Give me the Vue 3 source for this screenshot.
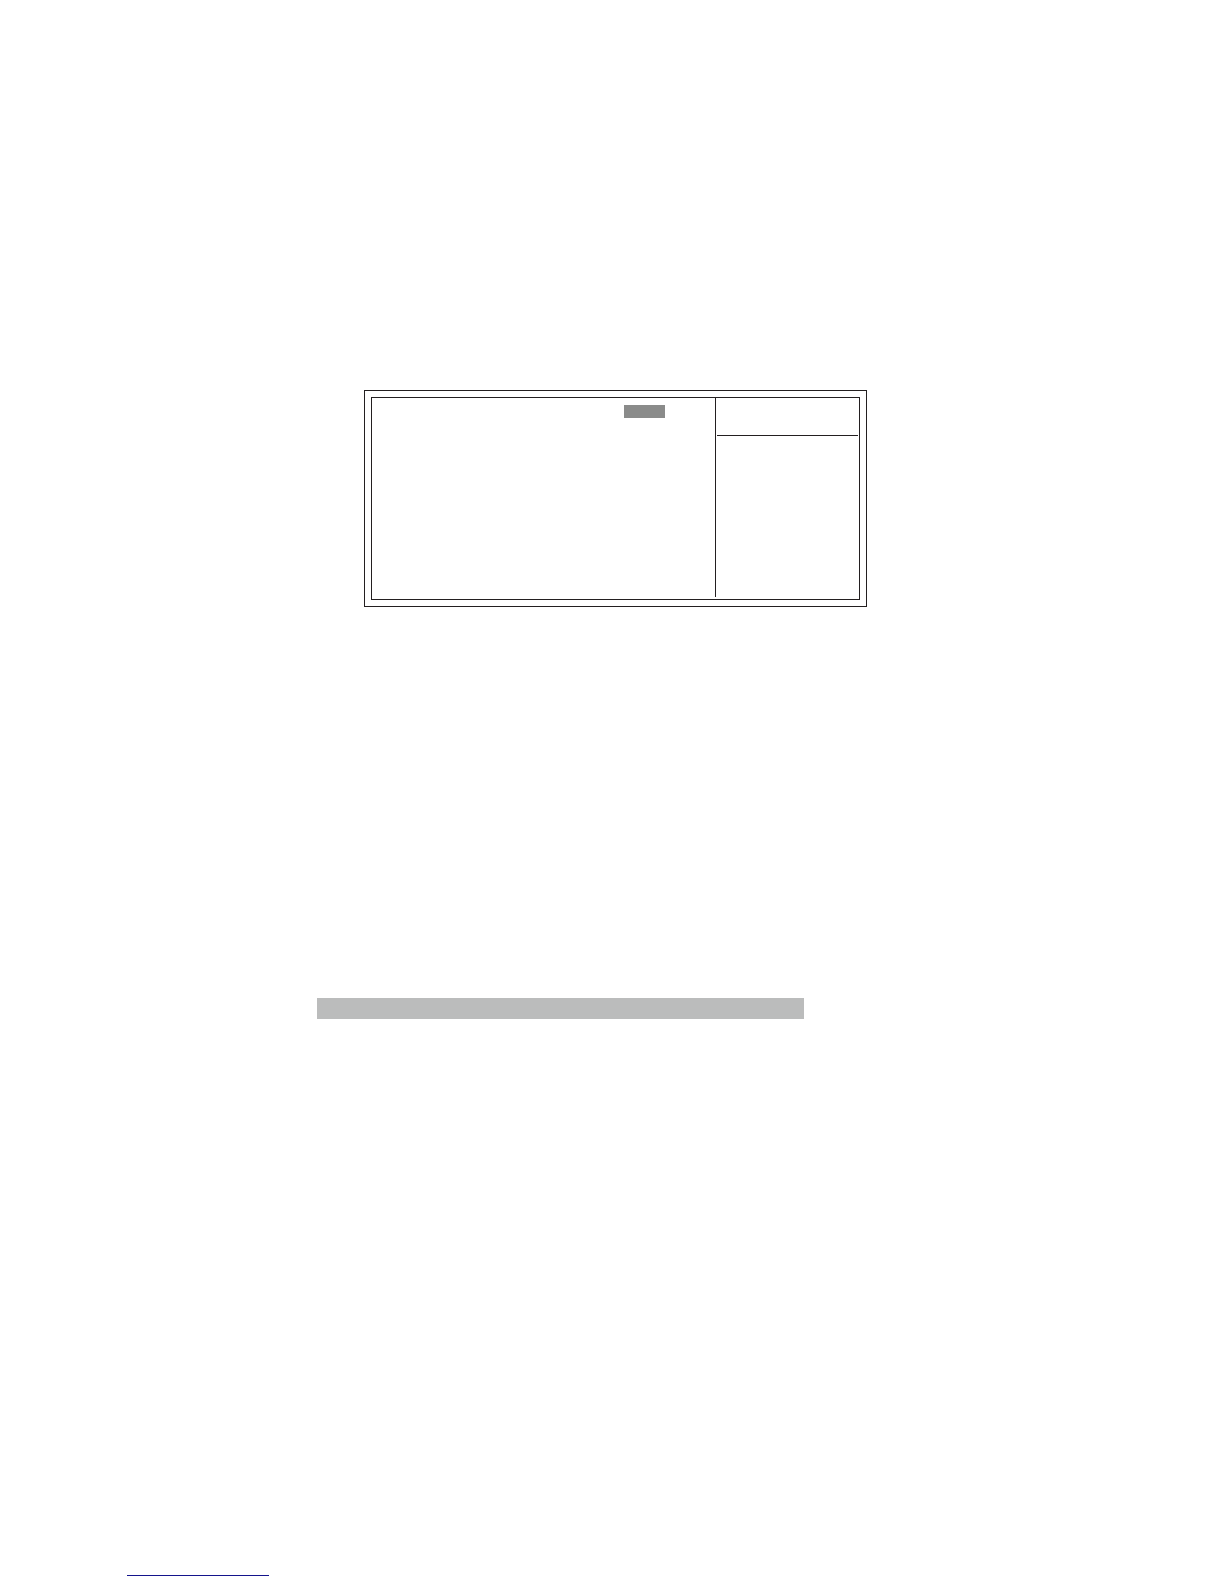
<template>
  <main class="page">
    <section class="setup">
      <div class="screen">
        <div class="options">
          <div class="selected"></div>
        </div>
        <aside class="help">
          <div class="help-title"></div>
        </aside>
      </div>
    </section>
    <div class="band"></div>
    <footer class="footer">
      <hr class="rule">
    </footer>
  </main>
</template>

<script setup>
</script>

<style>
body {
  margin: 0;
  background: #fff;
}
</style>

<style scoped>
.page {
  box-sizing: border-box;
  display: flex;
  flex-direction: column;
  min-height: 100vh;
  padding: 390px 127px 8px;
}

/* double frame */
.setup {
  box-sizing: border-box;
  width: 100%;
  max-width: 503px;
  margin-left: 237px;
  padding: 6px;
  border: 1px solid #231f20;
}

.screen {
  display: grid;
  grid-template-columns: 1fr 144px;
  min-height: 201px;
  border: 1px solid #231f20;
}

.options {
  display: flex;
  justify-content: flex-end;
  align-items: flex-start;
  padding: 7px 50px 0 0;
}

.selected {
  width: 41px;
  height: 13px;
  background: #8a8b8a;
}

.help {
  margin-bottom: 2px;
  padding: 0 1px;
  border-left: 1px solid #231f20;
}

.help-title {
  height: 37px;
  border-bottom: 1px solid #231f20;
}

.band {
  width: 100%;
  max-width: 487px;
  height: 21px;
  margin: 391px 0 0 190px;
  background: #bbbcbc;
}

.footer {
  margin-top: auto;
}

.rule {
  width: 142px;
  height: 1px;
  margin: 0;
  border: 0;
  background: #14148c;
}
</style>
